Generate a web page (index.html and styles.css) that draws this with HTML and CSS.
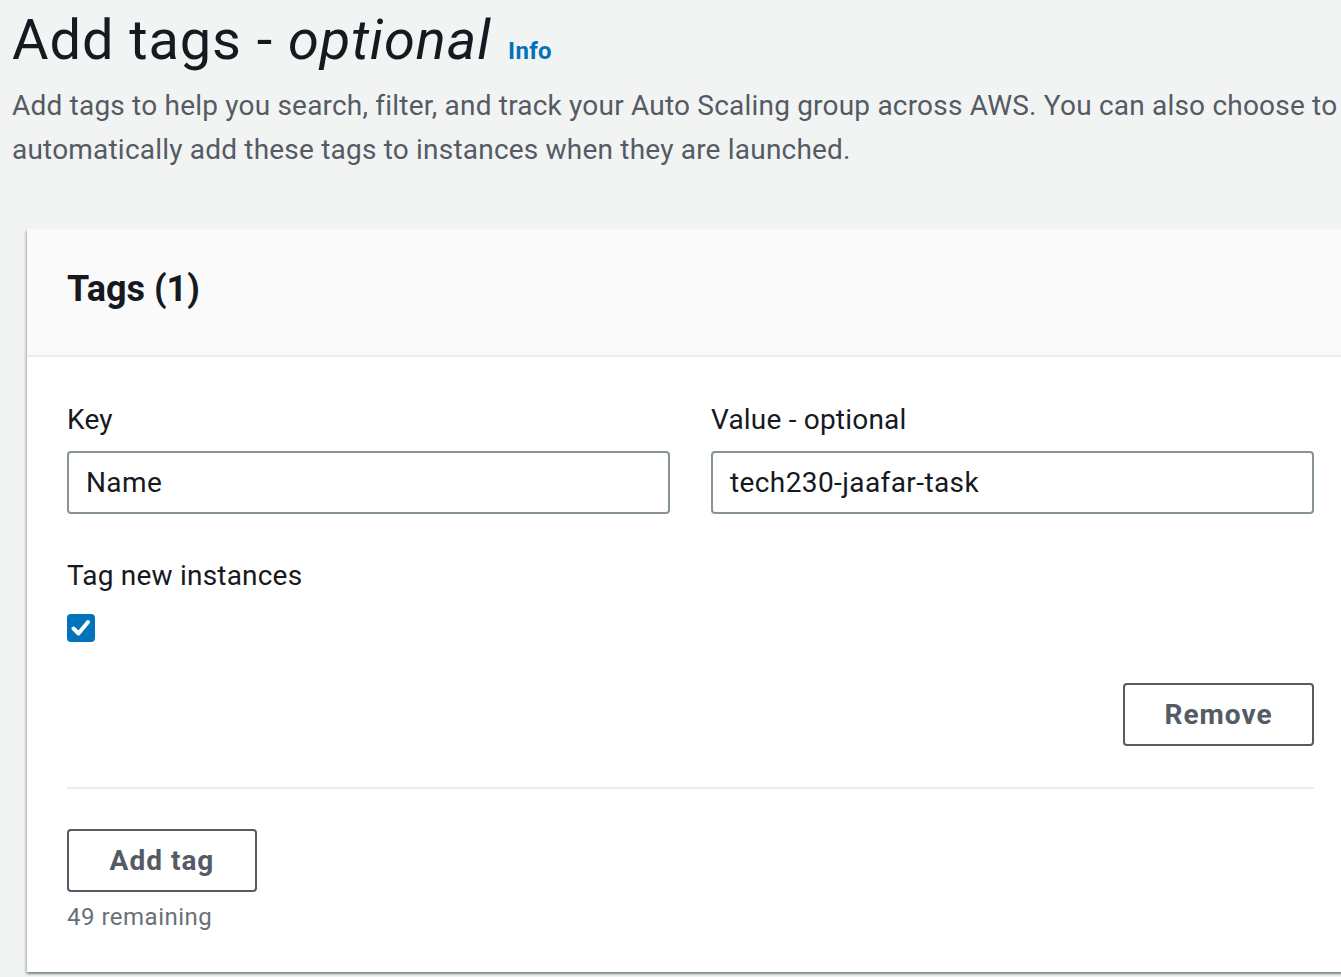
FILE: index.html
```html
<!DOCTYPE html>
<html lang="en">
<head>
<meta charset="utf-8">
<title>Add tags</title>
<link rel="stylesheet" href="styles.css">
</head>
<body>
<div class="page">
  <header class="page-header">
    <h1 class="title">Add tags - <em>optional</em> <a class="info" href="#">Info</a></h1>
    <p class="desc">Add tags to help you search, filter, and track your Auto Scaling group across AWS. You can also choose to automatically add these tags to instances when they are launched.</p>
  </header>
  <section class="card">
    <div class="card-header">
      <h2 class="card-title">Tags (1)</h2>
    </div>
    <div class="card-body">
      <div class="tag-row">
        <div class="fields">
          <div class="field">
            <label class="label">Key</label>
            <div class="input">Name</div>
          </div>
          <div class="field">
            <label class="label">Value - optional</label>
            <div class="input">tech230-jaafar-task</div>
          </div>
        </div>
        <div class="field check-field">
          <label class="label">Tag new instances</label>
          <span class="checkbox">
            <svg width="28" height="28" viewBox="0 0 28 28"><polyline points="6.5,14.5 11.5,19.5 21,8" fill="none" stroke="#fff" stroke-width="4" stroke-linecap="round" stroke-linejoin="round"/></svg>
          </span>
        </div>
        <div class="row-actions">
          <button class="btn btn-remove">Remove</button>
        </div>
      </div>
      <div class="footer">
        <button class="btn btn-add">Add tag</button>
        <div class="remaining">49 remaining</div>
      </div>
    </div>
  </section>
</div>
</body>
</html>
```

FILE: styles.css
```css
html, body {
  margin: 0;
  padding: 0;
  overflow: hidden;
}
body {
  background: #f2f3f3;
  font-family: Roboto, "Noto Sans", Arial, sans-serif;
  color: #16191f;
  width: 1341px;
  height: 977px;
}
.page {
  padding-left: 12px;
}
.title {
  margin: 0;
  font-size: 56px;
  line-height: 80px;
  font-weight: 400;
  color: #16191f;
  white-space: nowrap;
  letter-spacing: 0.9px;
}
.title em {
  font-style: italic;
}
.info {
  font-size: 24px;
  line-height: 1;
  font-weight: 700;
  letter-spacing: 0.3px;
  color: #0073bb;
  text-decoration: none;
  margin-left: 2px;
}
.desc {
  margin: 4px 0 0;
  font-size: 28px;
  line-height: 44px;
  color: #545b64;
  width: 1329px;
  letter-spacing: 0.2px;
}
.card {
  margin: 57px 0 0 15px;
  width: 1327px;
  background: #fff;
  box-shadow: 0 2px 2px 0 rgba(0, 28, 36, 0.3), 2px 2px 2px 0 rgba(0, 28, 36, 0.15), -2px 2px 2px 0 rgba(0, 28, 36, 0.15);
}
.card-header {
  background: #fafafa;
  border-bottom: 2px solid #eaeded;
  padding: 38px 40px 44px;
}
.card-title {
  margin: 0;
  font-size: 36px;
  line-height: 44px;
  font-weight: 700;
  color: #16191f;
}
.card-body {
  padding: 41px 40px 39px;
}
.fields {
  display: grid;
  grid-template-columns: 1fr 1fr;
  column-gap: 41px;
}
.field {
  display: flex;
  flex-direction: column;
}
.label {
  font-size: 28px;
  line-height: 44px;
  color: #16191f;
  margin-bottom: 9px;
  letter-spacing: 0.2px;
}
.input {
  box-sizing: border-box;
  height: 63px;
  border: 2px solid #879596;
  border-radius: 4px;
  padding: 0 17px;
  font-size: 28px;
  line-height: 59px;
  color: #16191f;
  letter-spacing: 0.4px;
}
.check-field {
  margin-top: 40px;
}
.check-field .label {
  margin-bottom: 16px;
}
.checkbox {
  display: block;
  width: 28px;
  height: 28px;
  border-radius: 4px;
  background: #0073bb;
}
.checkbox svg {
  display: block;
}
.row-actions {
  display: flex;
  justify-content: flex-end;
  margin-top: 41px;
  padding-bottom: 41px;
  border-bottom: 2px solid #eaeded;
}
.btn {
  box-sizing: border-box;
  height: 63px;
  background: #fff;
  border: 2px solid #545b64;
  border-radius: 4px;
  font-family: inherit;
  font-size: 28px;
  font-weight: 700;
  color: #545b64;
  letter-spacing: 1px;
  padding: 0;
  cursor: pointer;
}
.btn-remove {
  width: 191px;
}
.btn-add {
  width: 190px;
}
.footer {
  padding-top: 40px;
}
.footer .btn {
  display: block;
}
.remaining {
  margin-top: 9px;
  font-size: 24px;
  line-height: 32px;
  color: #687078;
  letter-spacing: 0.5px;
}
```
